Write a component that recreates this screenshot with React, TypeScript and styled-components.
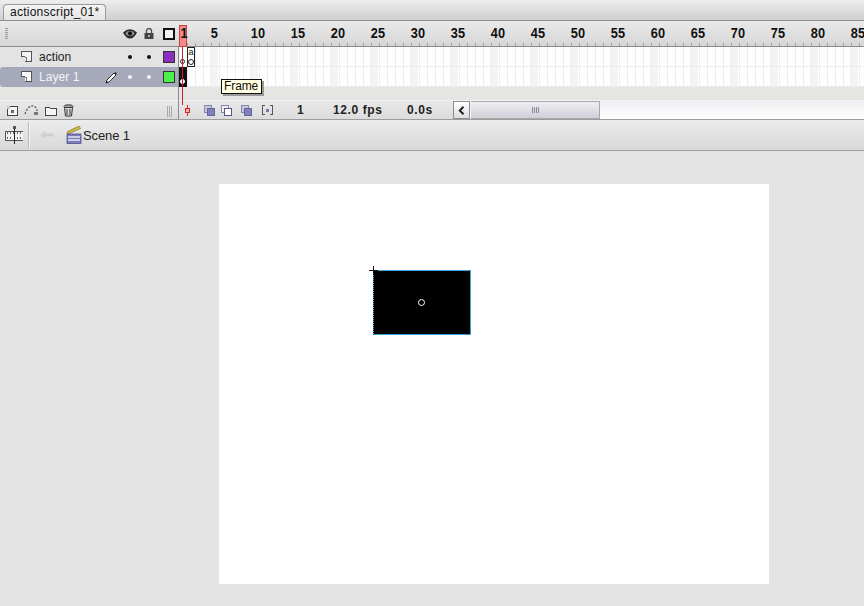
import React from "react";
import styled, { createGlobalStyle } from "styled-components";

const FRAME_LABELS = [1, 5, 10, 15, 20, 25, 30, 35, 40, 45, 50, 55, 60, 65, 70, 75, 80, 85];

const GlobalStyle = createGlobalStyle`
  html, body {
    margin: 0;
    padding: 0;
    height: 100%;
    background: #e3e3e3;
    overflow: hidden;
  }
  #root {
    height: 100%;
  }
`;

const Page = styled.div`
  width: 864px;
  height: 606px;
  display: flex;
  flex-direction: column;
  font-family: "Liberation Sans", Arial, sans-serif;
  color: #111;
  overflow: hidden;
`;

const TabBar = styled.div`
  height: 20px;
  flex: none;
  display: flex;
  align-items: flex-end;
  padding-left: 3px;
  background: linear-gradient(#eeeeee, #cfcfcf);
  border-bottom: 1px solid #8f8f8f;
`;

const Tab = styled.div`
  width: 95px;
  height: 15px;
  border: 1px solid #9a9a9a;
  border-bottom: none;
  border-radius: 4px 4px 0 0;
  background: linear-gradient(#f4f4f4, #e4e4e4);
  font-size: 12px;
  line-height: 15px;
  letter-spacing: 0.25px;
  padding-left: 6px;
  white-space: nowrap;
`;

const Timeline = styled.div`
  position: relative;
  flex: none;
`;

const HeaderRow = styled.div`
  height: 25px;
  display: flex;
  background: linear-gradient(#eaeaea, #d6d6d6);
  border-bottom: 1px solid #8c8c8c;
`;

const LayerGrid = styled.div<{ $selected?: boolean }>`
  width: 178px;
  flex: none;
  box-sizing: border-box;
  display: grid;
  grid-template-columns: 18px 66px 15px 20px 18px 17px;
  padding-left: 21px;
  align-items: center;
  justify-items: start;
  font-size: 12px;
  color: ${(p) => (p.$selected ? "#f4f4f8" : "#1a1a1a")};
  background: ${(p) => (p.$selected ? "#a6a9b9" : "transparent")};
  border-radius: ${(p) => (p.$selected ? "3px 0 0 3px" : "0")};
`;

const Grip = styled.div`
  position: absolute;
  left: 5px;
  top: 7px;
  width: 3px;
  height: 11px;
  background: repeating-linear-gradient(#9a9a9a 0 1px, transparent 1px 2px);
`;

const HeaderIcon = styled.div`
  display: flex;
  justify-content: center;
  justify-self: center;
  align-items: center;
`;

const OutlineBox = styled.div`
  width: 8px;
  height: 8px;
  margin-left: 5px;
  border: 2px solid #111;
  background: #f2f2f2;
`;

const Ruler = styled.div`
  flex: 1;
  display: grid;
  grid-template-columns: repeat(86, 8px);
  background:
    linear-gradient(90deg, #a4a4a4 1px, transparent 1px) 1px 100% / 8px 3px repeat-x;
  overflow: hidden;
`;

const RulerLabel = styled.span<{ $frame: number }>`
  position: relative;
  z-index: 2;
  grid-column: ${(p) => p.$frame} / span 3;
  grid-row: 1;
  font-size: 15px;
  font-weight: bold;
  line-height: 14px;
  padding-top: 5px;
  padding-left: ${(p) => (p.$frame === 1 ? 3 : 1)}px;
  transform: scaleX(0.85);
  transform-origin: left;
  white-space: nowrap;
  color: #111;
`;

const Row = styled.div`
  height: 20px;
  display: flex;
`;

const Track = styled.div`
  flex: 1;
  display: flex;
  box-sizing: border-box;
  border-bottom: 1px solid #ececec;
  background-color: #ffffff;
  background-image:
    linear-gradient(90deg, #ededed 1px, transparent 1px),
    repeating-linear-gradient(90deg, transparent 0 32px, #f4f4f4 32px 40px);
  background-size: 8px 100%, 100% 100%;
  background-position: 1px 0, 0 0;
`;

const LayerName = styled.span`
  letter-spacing: 0.05px;
`;

const Dot = styled.span<{ $light?: boolean }>`
  width: 4px;
  height: 4px;
  border-radius: 50%;
  justify-self: center;
  background: ${(p) => (p.$light ? "#f2f2f6" : "#111")};
`;

const Swatch = styled.span<{ $color: string }>`
  width: 10px;
  height: 10px;
  margin-left: 5px;
  border: 1px solid #333;
  background: ${(p) => p.$color};
`;

const KeyCell = styled.div<{ $filled?: boolean }>`
  width: 9px;
  height: 20px;
  box-sizing: border-box;
  display: flex;
  justify-content: center;
  align-items: flex-end;
  padding-bottom: 3px;
  background: ${(p) => (p.$filled ? "linear-gradient(90deg, transparent 1px, #111 1px)" : "transparent")};
`;

const KeyDot = styled.span<{ $filled?: boolean }>`
  width: 5px;
  height: 5px;
  box-sizing: border-box;
  border-radius: 50%;
  border: 1px solid ${(p) => (p.$filled ? "#fff" : "#222")};
  background: ${(p) => (p.$filled ? "#fff" : "transparent")};
`;

const ScriptCell = styled.div`
  width: 8px;
  height: 20px;
  box-sizing: border-box;
  border: 1px solid #222;
  background: #fff;
  display: flex;
  flex-direction: column;
  align-items: center;
  font-size: 9px;
  line-height: 9px;
`;

const ScriptDot = styled.span`
  width: 6px;
  height: 6px;
  margin-top: 2px;
  box-sizing: border-box;
  border-radius: 50%;
  border: 1px solid #222;
`;

const Spacer = styled.div`
  height: 13px;
  background: #e5e5e3;
  border-bottom: 1px solid #f4f4f4;
`;

const Toolbar = styled.div`
  height: 18px;
  display: flex;
  align-items: center;
  background: linear-gradient(#e8e8e8, #dcdcdc);
  border-bottom: 1px solid #9c9c9c;
`;

const ToolLeft = styled.div`
  width: 178px;
  flex: none;
  display: flex;
  align-items: center;
  gap: 5.5px;
  padding-left: 6px;
  box-sizing: border-box;
  position: relative;
`;

const ToolGrip = styled.div`
  position: absolute;
  right: 6px;
  top: 2px;
  width: 5px;
  height: 11px;
  background: repeating-linear-gradient(90deg, #a8a8a8 0 1px, transparent 1px 2px);
`;

const MarkerSlot = styled.span`
  display: flex;
  margin-left: 7px;
`;

const OnionGroup = styled.div`
  display: flex;
  align-items: center;
  width: 83px;
`;

const OnionSlot = styled.span<{ $left: number }>`
  display: flex;
  margin-left: ${(p) => p.$left}px;
`;

const ToolReadout = styled.span<{ $width: number; $indent?: number }>`
  width: ${(p) => p.$width}px;
  padding-left: ${(p) => p.$indent ?? 0}px;
  flex: none;
  font-size: 12px;
  font-weight: bold;
  letter-spacing: 0.6px;
  white-space: nowrap;
  color: #222;
`;

const Scrollbar = styled.div`
  flex: 1;
  height: 18px;
  display: flex;
  align-items: stretch;
  background: linear-gradient(#eeeef2, #ffffff);
`;

const ScrollArrow = styled.div`
  width: 17px;
  box-sizing: border-box;
  border: 1px solid #8c8c8c;
  background: linear-gradient(#ffffff, #dcdce2);
  display: flex;
  align-items: center;
  justify-content: center;
`;

const ScrollThumb = styled.div`
  width: 129px;
  margin-left: 1px;
  box-sizing: border-box;
  border: 1px solid #a8a8a8;
  border-left: none;
  background: linear-gradient(#eeeef2, #cfd0d8);
  display: flex;
  align-items: center;
  justify-content: center;
`;

const ThumbGrip = styled.div`
  width: 7px;
  height: 6px;
  background: repeating-linear-gradient(90deg, #8a8a96 0 1px, transparent 1px 2px);
`;

const Playhead = styled.div`
  position: absolute;
  left: 179px;
  top: 4px;
  width: 6px;
  height: 20px;
  z-index: 1;
  background: #f58a8a;
  border: 1px solid #c84040;
`;

const PlayLine = styled.div`
  position: absolute;
  left: 182px;
  top: 25px;
  width: 1px;
  height: 59px;
  background: #c82020;
`;

const FrameDivider = styled.div`
  position: absolute;
  left: 178px;
  top: 26px;
  width: 1px;
  height: 72px;
  background: #8a8a8a;
`;

const Tooltip = styled.div`
  position: absolute;
  left: 221px;
  top: 58px;
  height: 13px;
  padding: 0 2px;
  width: 35px;
  border: 1px solid #111;
  background: #ffffe1;
  box-shadow: 2px 2px 0 #9a9a9a;
  font-size: 12px;
  line-height: 13px;
  letter-spacing: -0.1px;
  color: #111;
  white-space: nowrap;
`;

const SceneBar = styled.div`
  height: 30px;
  flex: none;
  display: flex;
  align-items: center;
  background: linear-gradient(#ececec, #d8d8d8);
  border-bottom: 1px solid #a0a0a0;
  padding-left: 5px;
`;

const SceneDivider = styled.div`
  width: 1px;
  height: 26px;
  margin: 0 10px 0 5px;
  background: #f6f6f6;
  border-left: 1px solid #b8b8b8;
`;

const ClapperSlot = styled.span`
  display: flex;
  margin-left: 12px;
`;

const SceneName = styled.span`
  font-size: 13px;
  letter-spacing: -0.1px;
  margin-left: 1px;
  color: #222;
`;

const Workspace = styled.div`
  flex: 1;
  background: #e3e3e3;
  padding: 33px 0 0 219px;
`;

const Stage = styled.div`
  position: relative;
  width: 550px;
  height: 400px;
  background: #fff;
`;

const Shape = styled.div`
  position: absolute;
  left: 154px;
  top: 86px;
  width: 96px;
  height: 63px;
  background: linear-gradient(#000, #000) padding-box, #35a0dc border-box;
  border: 1px solid #35a0dc;
  border-left: 1px dotted #111;
  box-sizing: content-box;
`;

const RegPoint = styled.div`
  position: absolute;
  left: 44px;
  top: 28px;
  width: 5px;
  height: 5px;
  border: 1px solid #fff;
  border-radius: 50%;
`;

const Crosshair = styled.svg`
  position: absolute;
  left: 150px;
  top: 82px;
`;

const LayerIcon = ({ light }: { light?: boolean }) => (
  <svg width="12" height="12" viewBox="0 0 12 12" shapeRendering="crispEdges">
    <path d="M1 1h9v9H4V6H1z" fill={light ? "#ffffff" : "#f4f4f4"} />
    <path d="M0 0h11v11H4v-1h6V1H1v4h3v1H0z" fill="#555" />
    <path d="M4 6h2v4H5V7H4z" fill="#777" />
  </svg>
);

const Eye = () => (
  <svg width="14" height="10" viewBox="0 0 14 10">
    <path d="M0 3.5 Q7 -3 14 3.5 Q11 9.5 7 9.5 Q3 9.5 0 3.5z" fill="#2a2a2a" />
    <ellipse cx="7" cy="4.5" rx="4.2" ry="2.4" fill="#8c8c8c" />
    <circle cx="7" cy="4.5" r="2" fill="#111" />
  </svg>
);

const Lock = () => (
  <svg width="10" height="11" viewBox="0 0 10 11">
    <path d="M2.5 5V3a2.5 2.5 0 0 1 5 0v2" fill="none" stroke="#555" strokeWidth="1.4" />
    <rect x="0.5" y="5" width="9" height="6" fill="#444" />
    <rect x="4" y="7" width="2" height="2" fill="#aaa" />
  </svg>
);

const Pencil = () => (
  <svg width="13" height="13" viewBox="0 0 13 13">
    <path d="M1 12l1-3 7-7 2 2-7 7z" fill="#fff" stroke="#222" strokeWidth="0.9" />
    <path d="M1 12l.7-2.2 1.5 1.5z" fill="#111" />
    <path d="M9 2l2 2 1-1.5-1.5-1.5z" fill="#333" />
  </svg>
);

const NewLayer = () => (
  <svg width="12" height="12" viewBox="0 0 12 12" shapeRendering="crispEdges">
    <rect x="1" y="2" width="10" height="9" fill="#f4f4f4" stroke="#444" />
    <rect x="5" y="6" width="3" height="3" fill="#666" />
    <rect x="1" y="2" width="3" height="3" fill="#c8c8c8" />
  </svg>
);

const GuideLayer = () => (
  <svg width="15" height="12" viewBox="0 0 15 12">
    <path d="M1 10 Q4 1 10 2 Q13 4 13 7" fill="none" stroke="#555" strokeWidth="1.2" strokeDasharray="2 1.5" />
    <rect x="10" y="8" width="4" height="3" fill="#777" />
  </svg>
);

const Folder = () => (
  <svg width="13" height="11" viewBox="0 0 13 11" shapeRendering="crispEdges">
    <path d="M1 2h4l1 1h6v7H1z" fill="#f4f4f4" stroke="#444" />
  </svg>
);

const Trash = () => (
  <svg width="11" height="13" viewBox="0 0 11 13">
    <ellipse cx="5.5" cy="2.5" rx="4.5" ry="1.7" fill="#aaa" stroke="#333" />
    <path d="M1.5 3.5l1 8.5h6l1-8.5z" fill="#ddd" stroke="#333" />
    <path d="M4 5v6M7 5v6" stroke="#333" />
  </svg>
);

const PlayMarker = () => (
  <svg width="5" height="11" viewBox="0 0 5 11" shapeRendering="crispEdges">
    <path d="M2 0h1v11H2z" fill="#d22" />
    <rect x="0.5" y="3.5" width="4" height="4" fill="#f6b0b0" stroke="#d22" />
  </svg>
);

const Onion = ({ mode }: { mode: "filled" | "outline" | "both" | "bracket" }) => {
  if (mode === "bracket") {
    return (
      <svg width="11" height="10" viewBox="0 0 11 10" shapeRendering="crispEdges">
        <path d="M3 .5H.5v9H3M8 .5h2.5v9H8" fill="none" stroke="#555" />
        <rect x="4" y="4" width="3" height="3" fill="#7878b0" />
      </svg>
    );
  }
  return (
    <svg width="11" height="11" viewBox="0 0 11 11" shapeRendering="crispEdges">
      <rect x="0.5" y="0.5" width="7" height="7" fill={mode === "outline" ? "#eee" : "#c6c6dc"} stroke="#8888aa" />
      <rect
        x="3.5"
        y="3.5"
        width="7"
        height="7"
        fill={mode === "outline" ? "#ffffff" : "#8080bc"}
        stroke={mode === "outline" ? "#555588" : "#6464a0"}
      />
    </svg>
  );
};

const ArrowLeft = () => (
  <svg width="7" height="9" viewBox="0 0 7 9">
    <path d="M5.5 .8L1.8 4.5l3.7 3.7" fill="none" stroke="#222" strokeWidth="2" />
  </svg>
);

const EditSymbols = () => (
  <svg width="18" height="20" viewBox="0 0 18 20" shapeRendering="crispEdges">
    <rect x="0" y="6" width="18" height="9" fill="#f2f2f2" stroke="#555" />
    <path d="M2 7h1v2H2zM5 7h1v2H5zM8 7h1v2H8zM12 7h1v2h-1zM15 7h1v2h-1zM2 12h1v2H2zM5 12h1v2H5zM12 12h1v2h-1zM15 12h1v2h-1z" fill="#666" />
    <path d="M9 2h1v17H9z" fill="#222" />
    <rect x="8" y="1" width="3" height="3" fill="#555" />
  </svg>
);

const BackArrow = () => (
  <svg width="14" height="10" viewBox="0 0 14 10">
    <path d="M0 5l5-4v2.5h9v3H5V9z" fill="#d0d0d0" />
  </svg>
);

const Clapper = () => (
  <svg width="16" height="18" viewBox="0 0 16 18">
    <path d="M1 6L13 0l1.5 2.5L2 8z" fill="#d8c040" stroke="#6a6020" strokeWidth="0.6" />
    <rect x="1" y="8" width="14" height="9.5" fill="#7c7cc0" stroke="#50508a" strokeWidth="0.8" />
    <path d="M2 11h12M2 14h12" stroke="#e8e8f4" strokeWidth="1.3" />
  </svg>
);

const LayerRow = ({
  name,
  color,
  selected,
  children,
}: {
  name: string;
  color: string;
  selected?: boolean;
  children: React.ReactNode;
}) => (
  <Row>
    <LayerGrid $selected={selected}>
      <LayerIcon light={selected} />
      <LayerName>{name}</LayerName>
      {selected ? <Pencil /> : <span />}
      <Dot $light={selected} />
      <Dot $light={selected} />
      <Swatch $color={color} />
    </LayerGrid>
    <Track>{children}</Track>
  </Row>
);

export default function App() {
  return (
    <Page>
      <GlobalStyle />
      <TabBar>
        <Tab>actionscript_01*</Tab>
      </TabBar>
      <Timeline>
        <HeaderRow>
          <Grip />
          <LayerGrid>
            <span />
            <span />
            <span />
            <HeaderIcon>
              <Eye />
            </HeaderIcon>
            <HeaderIcon>
              <Lock />
            </HeaderIcon>
            <OutlineBox />
          </LayerGrid>
          <Ruler>
            {FRAME_LABELS.map((n) => (
              <RulerLabel key={n} $frame={n}>
                {n}
              </RulerLabel>
            ))}
          </Ruler>
        </HeaderRow>
        <LayerRow name="action" color="#8a2fc0">
          <KeyCell>
            <KeyDot />
          </KeyCell>
          <ScriptCell>
            a
            <ScriptDot />
          </ScriptCell>
        </LayerRow>
        <LayerRow name="Layer 1" color="#4cf04c" selected>
          <KeyCell $filled>
            <KeyDot $filled />
          </KeyCell>
        </LayerRow>
        <Spacer />
        <Toolbar>
          <ToolLeft>
            <NewLayer />
            <GuideLayer />
            <Folder />
            <Trash />
            <ToolGrip />
          </ToolLeft>
          <MarkerSlot>
            <PlayMarker />
          </MarkerSlot>
          <OnionGroup>
            <OnionSlot $left={14}>
              <Onion mode="both" />
            </OnionSlot>
            <OnionSlot $left={6}>
              <Onion mode="outline" />
            </OnionSlot>
            <OnionSlot $left={9}>
              <Onion mode="filled" />
            </OnionSlot>
            <OnionSlot $left={10}>
              <Onion mode="bracket" />
            </OnionSlot>
          </OnionGroup>
          <ToolReadout $width={36} $indent={24}>
            1
          </ToolReadout>
          <ToolReadout $width={74}>12.0 fps</ToolReadout>
          <ToolReadout $width={46}>0.0s</ToolReadout>
          <Scrollbar>
            <ScrollArrow>
              <ArrowLeft />
            </ScrollArrow>
            <ScrollThumb>
              <ThumbGrip />
            </ScrollThumb>
          </Scrollbar>
        </Toolbar>
        <FrameDivider />
        <PlayLine />
        <Playhead />
        <Tooltip>Frame</Tooltip>
      </Timeline>
      <SceneBar>
        <EditSymbols />
        <SceneDivider />
        <BackArrow />
        <ClapperSlot>
          <Clapper />
        </ClapperSlot>
        <SceneName>Scene 1</SceneName>
      </SceneBar>
      <Workspace>
        <Stage>
          <Shape>
            <RegPoint />
          </Shape>
          <Crosshair width="9" height="9" viewBox="0 0 9 9" shapeRendering="crispEdges">
            <path d="M4 0h1v9H4zM0 4h9v1H0z" fill="#111" />
          </Crosshair>
        </Stage>
      </Workspace>
    </Page>
  );
}
